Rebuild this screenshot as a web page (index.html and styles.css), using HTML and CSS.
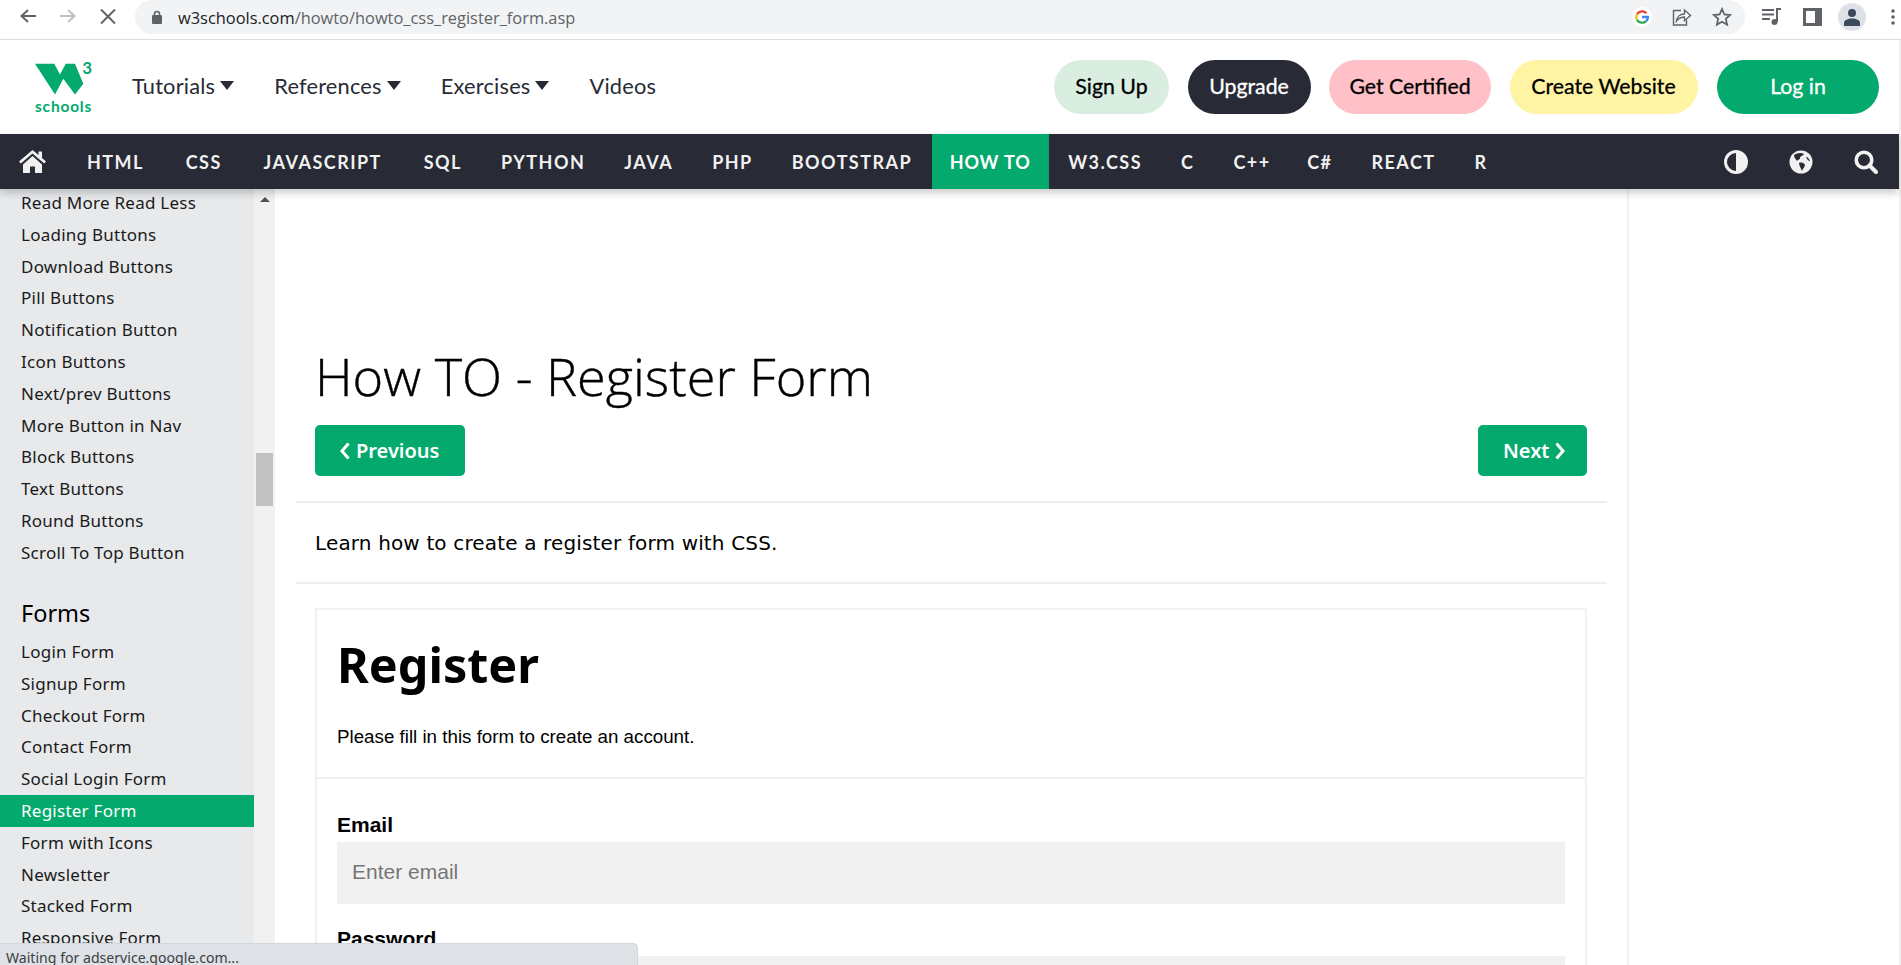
FILE: index.html
```html
<!DOCTYPE html>
<html lang="en">
  <head>
    <meta charset="UTF-8" />
    <title>How To Create a Register Form</title>
    <link rel="stylesheet" href="styles.css">
  </head>
  <body>
    <div class="toolbar">
      <span class="tool"><svg width="20" height="20" viewBox="0 0 20 20"><path d="M18 9H4M10 3L3.500 9l6.500 6" fill="none" stroke="#5f6368" stroke-width="2"/></svg></span>
      <span class="tool"><svg width="20" height="20" viewBox="0 0 20 20"><path d="M2 9h14M10 3l6.500 6-6.500 6" fill="none" stroke="#bdc1c6" stroke-width="2"/></svg></span>
      <span class="tool"><svg width="18" height="18" viewBox="0 0 18 18"><path d="M2 1.500l14 14M16 1.500l-14 14" fill="none" stroke="#5f6368" stroke-width="2"/></svg></span>
      <div class="address">
        <svg class="lock" width="10" height="14" viewBox="0 0 10 14"><path d="M2.500 6V4a2.500 2.500 0 0 1 5 0v2" fill="none" stroke="#5f6368" stroke-width="1.500"/><rect y="5" width="10" height="9" rx="1" fill="#5f6368"/></svg>
        <span class="url">w3schools.com<span class="url-path">/howto/howto_css_register_form.asp</span></span>
        <span class="address-icons">
          <span class="tool-in"><svg width="20" height="20" viewBox="0 0 20 20"><circle cx="10" cy="10" r="10" fill="#fff"/><path d="M14.500 6.200A6 6 0 0 0 5 7.200" fill="none" stroke="#ea4335" stroke-width="2.300"/><path d="M5 7.200a6 6 0 0 0 0 5.600" fill="none" stroke="#fbbc05" stroke-width="2.300"/><path d="M5 12.800a6 6 0 0 0 9.200 1.300" fill="none" stroke="#34a853" stroke-width="2.300"/><path d="M14.200 14.100A6 6 0 0 0 16 10h-6" fill="none" stroke="#4285f4" stroke-width="2.300"/></svg></span>
          <span class="tool-in"><svg width="20" height="20" viewBox="0 0 20 20"><path d="M9 3.500H1.500V18h13v-5" fill="none" stroke="#5f6368" stroke-width="1.400"/><path d="M4.500 14c.5-4 3.500-7 8-7V3l6 5.500-6 5V10c-3.500 0-6 1.500-8 4z" fill="#fff" stroke="#5f6368" stroke-width="1.400"/></svg></span>
          <span class="tool-in"><svg width="20" height="20" viewBox="0 0 20 20"><path d="M10 2l2.400 5.500 5.800.5-4.400 3.900 1.300 5.800L10 14.700l-5.100 3 1.300-5.800L1.800 8l5.800-.5z" fill="none" stroke="#5f6368" stroke-width="1.800"/></svg></span>
        </span>
      </div>
      <span class="tool first-ext"><svg width="20" height="18" viewBox="0 0 20 18"><path d="M0 2h12M0 6.500h12M0 11h8" fill="none" stroke="#5f6368" stroke-width="1.800"/><path d="M15 14V1h4" fill="none" stroke="#5f6368" stroke-width="2"/><circle cx="12.500" cy="14" r="3" fill="#5f6368"/></svg></span>
      <span class="tool"><svg width="19" height="18" viewBox="0 0 19 18"><path d="M0 0h19v18H0z" fill="#5f6368"/><rect x="3" y="3" width="9" height="12" fill="#fff"/></svg></span>
      <span class="tool"><span class="avatar"><svg width="18" height="18" viewBox="0 0 18 18"><circle cx="9" cy="5" r="4" fill="#3c4a5e"/><path d="M1 18v-3c0-3 4-4.500 8-4.500s8 1.500 8 4.500v3z" fill="#3c4a5e"/></svg></span></span>
      <span class="tool tool-dots"><svg width="4" height="16" viewBox="0 0 4 16"><circle cx="2" cy="2" r="1.800" fill="#5f6368"/><circle cx="2" cy="8" r="1.800" fill="#5f6368"/><circle cx="2" cy="14" r="1.800" fill="#5f6368"/></svg></span>
    </div>

    <div class="page">
      <header class="site-header">
        <a class="logo">
          <svg width="57" height="34" viewBox="0 0 57 34"><path d="M0 2.800h19.300L25 13.500l5.700-10.700H40l8.300 20L40 33.500 28.300 17.800 20 33.500z" fill="#04aa6d"/></svg>
          <span class="logo-three">3</span>
          <span class="logo-name">schools</span>
        </a>
        <nav class="main-links">
          <a>Tutorials<i class="caret"></i></a>
          <a>References<i class="caret"></i></a>
          <a>Exercises<i class="caret"></i></a>
          <a>Videos</a>
        </nav>
        <div class="pills">
          <a class="pill pill-signup">Sign Up</a>
          <a class="pill pill-upgrade">Upgrade</a>
          <a class="pill pill-cert">Get Certified</a>
          <a class="pill pill-web">Create Website</a>
          <a class="pill pill-login">Log in</a>
        </div>
      </header>

      <nav class="topnav">
        <a class="home"><svg width="27" height="23" viewBox="0 0 27 23"><path d="M13.500 0L0 11.500 1.800 13.500 13.500 3.500l11.700 10 1.800-2-4-3.400V1.500h-3.500v3.600zM4 14.500L13.500 6l9.500 8.500V23h-7v-6.500h-5V23H4z" fill="#f1f1f1"/></svg></a>
        <a>HTML</a>
        <a class="roomy">CSS</a>
        <a class="roomy">JAVASCRIPT</a>
        <a class="roomy">SQL</a>
        <a>PYTHON</a>
        <a>JAVA</a>
        <a>PHP</a>
        <a>BOOTSTRAP</a>
        <a class="active">HOW TO</a>
        <a>W3.CSS</a>
        <a>C</a>
        <a>C++</a>
        <a class="tight">C#</a>
        <a>REACT</a>
        <a>R</a>
        <div class="nav-icons">
          <span class="nav-icon"><svg width="24" height="24" viewBox="0 0 24 24"><circle cx="12" cy="12" r="10.500" fill="#282a35" stroke="#f1f1f1" stroke-width="3"/><path d="M12 2a10 10 0 0 1 0 20z" fill="#f1f1f1"/></svg></span>
          <span class="nav-icon"><svg width="24" height="24" viewBox="0 0 24 24"><circle cx="12" cy="12" r="11.500" fill="#f1f1f1"/><path d="M5 5c3-2 7-3 10-1-1 2-4 2-4 4 0 2-2 1-3 3-1-2-3-3-3-6zM10 13c3-1 5 0 6 2 0 2-2 3-3 6-1-3-3-5-3-8zM17 7c2 0 3 2 4 4-2 0-3-2-4-4z" fill="#282a35"/></svg></span>
          <span class="nav-icon"><svg width="24" height="24" viewBox="0 0 24 24"><circle cx="10" cy="10" r="7.800" fill="none" stroke="#f1f1f1" stroke-width="3.600"/><path d="M15.500 15.500l6.500 6.500" stroke="#f1f1f1" stroke-width="4" stroke-linecap="round"/></svg></span>
        </div>
      </nav>

      <div class="layout">
        <aside class="sidebar">
          <div class="side-list">
            <a>Read More Read Less</a>
            <a>Loading Buttons</a>
            <a>Download Buttons</a>
            <a>Pill Buttons</a>
            <a>Notification Button</a>
            <a>Icon Buttons</a>
            <a>Next/prev Buttons</a>
            <a>More Button in Nav</a>
            <a>Block Buttons</a>
            <a>Text Buttons</a>
            <a>Round Buttons</a>
            <a>Scroll To Top Button</a>
            <h3>Forms</h3>
            <a>Login Form</a>
            <a>Signup Form</a>
            <a>Checkout Form</a>
            <a>Contact Form</a>
            <a>Social Login Form</a>
            <a class="current">Register Form</a>
            <a>Form with Icons</a>
            <a>Newsletter</a>
            <a>Stacked Form</a>
            <a>Responsive Form</a>
          </div>
          <div class="side-scroll">
            <i class="scroll-up"></i>
            <i class="scroll-thumb"></i>
          </div>
        </aside>

        <main class="content">
          <div class="inner">
            <h1 class="page-title">How TO - Register Form</h1>
            <div class="pager">
              <a class="pager-btn pager-prev"><svg width="10" height="18" viewBox="0 0 10 18"><path d="M8.500 1.500L2 9l6.500 7.500" fill="none" stroke="#fff" stroke-width="3"/></svg>Previous</a>
              <a class="pager-btn pager-next">Next<svg width="10" height="18" viewBox="0 0 10 18"><path d="M1.500 1.500L8 9l-6.500 7.500" fill="none" stroke="#fff" stroke-width="3"/></svg></a>
            </div>
          </div>
          <hr class="rule" />
          <p class="intro">Learn how to create a register form with CSS.</p>
          <hr class="rule rule-low" />
          <div class="inner">
            <form class="demo">
              <div class="demo-head">
                <h2>Register</h2>
                <p>Please fill in this form to create an account.</p>
              </div>
              <div class="demo-body">
                <label for="email">Email</label>
                <input id="email" type="text" placeholder="Enter email" />
                <label for="psw">Password</label>
                <input id="psw" type="password" />
              </div>
            </form>
          </div>
        </main>

        <aside class="right-col"></aside>
      </div>
    </div>

    <div class="status">Waiting for adservice.google.com...</div>
  </body>
</html>
```

FILE: styles.css
```css
* {
  box-sizing: border-box;
}

html,
body {
  height: 100%;
}

body {
  margin: 0;
  display: flex;
  flex-direction: column;
  overflow: hidden;
  background: #fff;
  color: #000;
  font-family: "Noto Sans", sans-serif;
}

/* browser bar */
.toolbar {
  flex: none;
  display: flex;
  height: 40px;
  padding: 0 0 6px 8px;
  border-bottom: 1px solid #dadce0;
  background: #fff;
}

.tool {
  width: 40px;
  display: flex;
  align-items: center;
  justify-content: center;
}

.tool-dots {
  width: 29px;
  padding-left: 13px;
}

.first-ext {
  margin-left: 7px;
}

.avatar {
  width: 28px;
  height: 28px;
  border-radius: 50%;
  background: #dee1e6;
  display: flex;
  align-items: center;
  justify-content: center;
}

.address {
  width: 1610px;
  height: 34px;
  margin-left: 7px;
  padding-left: 17px;
  display: flex;
  align-items: center;
  border-radius: 17px;
  background: #f1f3f4;
}

.lock {
  margin-right: 16px;
}

.url {
  font-size: 16.400px;
  color: #202124;
  font-family: "Open Sans", sans-serif;
}

.url-path {
  color: #5f6368;
}

.address-icons {
  margin-left: auto;
  margin-right: 3px;
  display: flex;
}

.tool-in {
  width: 40px;
  display: flex;
  justify-content: center;
}

/* site header */
.page {
  flex: 1;
  min-height: 0;
  display: flex;
  flex-direction: column;
  border-right: 2px solid #f1f1f1;
}

.site-header {
  flex: none;
  height: 94px;
  display: flex;
  align-items: center;
  padding: 0 20px 0 35px;
  font-family: Lato, sans-serif;
}

.logo {
  position: relative;
  width: 57px;
  height: 53px;
}

.logo svg {
  position: absolute;
  left: 0;
  top: 0;
}

.logo-three {
  position: absolute;
  right: 0;
  top: -3px;
  color: #04aa6d;
  font: 700 17px/20px Lato, sans-serif;
}

.logo-name {
  position: absolute;
  left: 0;
  bottom: -1px;
  color: #04aa6d;
  font: 700 15.500px/18px Lato, sans-serif;
  letter-spacing: 0.800px;
}

.main-links {
  display: flex;
  gap: 40px;
  margin-left: 40px;
  padding-bottom: 4px;
  font-size: 21.800px;
  letter-spacing: 0.200px;
  color: #282a35;
}

.main-links a {
  display: flex;
  align-items: center;
}

.caret {
  width: 0;
  height: 0;
  margin-left: 5px;
  border-top: 9px solid #282a35;
  border-left: 7px solid transparent;
  border-right: 7px solid transparent;
}

.pills {
  margin-left: auto;
  display: flex;
  gap: 18.500px;
}

.pill {
  height: 54px;
  padding-bottom: 2px;
  border-radius: 27px;
  display: flex;
  align-items: center;
  justify-content: center;
  font-size: 21.300px;
  font-weight: 400;
  -webkit-text-stroke: 0.300px;
}

.pill-signup {
  width: 115px;
  background: #d9eee1;
}

.pill-upgrade {
  width: 123px;
  background: #282a35;
  color: #fff;
}

.pill-cert {
  width: 162px;
  background: #ffc0c7;
}

.pill-web {
  width: 188px;
  margin-right: 1px;
  background: #fff4a3;
}

.pill-login {
  width: 162px;
  background: #04aa6d;
  color: #fff;
}

/* dark nav */
.topnav {
  flex: none;
  position: relative;
  z-index: 2;
  height: 55px;
  display: flex;
  background: #282a35;
  color: #f1f1f1;
  font-family: Lato, sans-serif;
  font-size: 18px;
  font-weight: 700;
  letter-spacing: 1.470px;
  box-shadow: 0 4px 8px rgba(0, 0, 0, 0.2);
}

.topnav a {
  display: flex;
  align-items: center;
  padding: 0 19.500px;
}

.topnav .home {
  width: 67.500px;
  padding: 0 0 0 19px;
}

.topnav .roomy {
  margin-left: 2.800px;
}

.topnav .tight {
  margin-left: -2.400px;
}

.topnav .active {
  padding: 0 18px;
  background: #04aa6d;
  color: #fff;
  letter-spacing: 0.900px;
}

.nav-icons {
  margin-left: auto;
  padding-right: 1px;
  display: flex;
}

.nav-icon {
  width: 65px;
  display: flex;
  align-items: center;
  justify-content: center;
}

/* body of the page */
.layout {
  flex: 1;
  min-height: 0;
  display: flex;
  overflow: hidden;
}

.sidebar {
  flex: none;
  width: 275px;
  display: flex;
  overflow: hidden;
}

.side-list {
  width: 254px;
  margin-top: -2px;
  background: #e7e9eb;
  font-size: 17px;
  letter-spacing: 0.250px;
}

.side-list a {
  display: block;
  height: 31.800px;
  line-height: 31.800px;
  padding-left: 21px;
  white-space: nowrap;
  color: #1a1a1a;
}

.side-list .current {
  background: #04aa6d;
  color: #fff;
}

.side-list h3 {
  height: 67.500px;
  margin: 0;
  padding: 28px 0 0 21px;
  font-size: 23.500px;
  font-weight: 400;
  letter-spacing: 0;
  line-height: 32px;
}

.side-scroll {
  width: 21px;
  padding-top: 8px;
  display: flex;
  flex-direction: column;
  align-items: center;
  background: #f1f1f1;
}

.scroll-up {
  width: 0;
  height: 0;
  border-bottom: 5px solid #505050;
  border-left: 5px solid transparent;
  border-right: 5px solid transparent;
}

.scroll-thumb {
  width: 17px;
  height: 53px;
  margin-top: 251px;
  background: #c1c1c1;
}

.content {
  width: 1354px;
  padding: 0 20px 0 21px;
  border-right: 2px solid #f1f1f1;
}

.inner {
  padding: 0 20px 0 19px;
}

.page-title {
  margin: 0;
  padding-top: 155px;
  font-family: "Open Sans", sans-serif;
  font-size: 52.300px;
  font-weight: 300;
  line-height: 64px;
  white-space: nowrap;
  -webkit-text-stroke: 0.400px;
}

.pager {
  display: flex;
  justify-content: space-between;
  margin-top: 17px;
}

.pager-btn {
  height: 51px;
  display: flex;
  align-items: center;
  gap: 6px;
  border-radius: 5px;
  background: #04aa6d;
  color: #fff;
  font-size: 20px;
  font-weight: 600;
}

.pager-prev {
  width: 150px;
  padding-left: 25px;
}

.pager-next {
  width: 109px;
  padding-left: 25px;
}

.rule {
  height: 2px;
  margin: 25px 0 0;
  border: 0;
  background: #eee;
}

.rule-low {
  margin-top: 0;
}

.intro {
  height: 79px;
  margin: 0;
  padding-left: 19px;
  font-family: "DejaVu Sans", sans-serif;
  font-size: 20px;
  letter-spacing: 0.150px;
  line-height: 80px;
}

.demo {
  margin-top: 24px;
  border: 2px solid #f1f1f1;
  border-width: 2px 2px 0;
  font-family: "Liberation Sans", sans-serif;
}

.demo-head {
  height: 169px;
  padding: 0 20px;
  border-bottom: 2px solid #f1f1f1;
}

.demo-head h2 {
  margin: 0;
  padding-top: 22px;
  font-family: "Noto Sans", sans-serif;
  font-size: 48.500px;
  font-weight: 700;
  line-height: 64px;
}

.demo-head p {
  margin: 29px 0 0;
  font-size: 18.760px;
  line-height: 24px;
}

.demo-body {
  padding: 34px 20px 0;
}

.demo-body label {
  display: block;
  margin-bottom: 5px;
  font-size: 21px;
  font-weight: 700;
  line-height: 24px;
}

.demo-body input {
  display: block;
  width: 100%;
  height: 62px;
  margin: 0 0 23px;
  padding: 0 15px 2px;
  border: 0;
  background: #f1f1f1;
  font-family: "Liberation Sans", sans-serif;
  font-size: 21px;
}

.right-col {
  flex: 1;
}

/* link status bubble */
.status {
  position: absolute;
  left: 0;
  bottom: 0;
  z-index: 3;
  width: 638px;
  height: 22px;
  padding-left: 6px;
  border-radius: 0 5px 0 0;
  border-top: 1px solid #d3d6da;
  border-right: 1px solid #d3d6da;
  background: #dee1e6;
  color: #3c4043;
  font-size: 14.100px;
  line-height: 28px;
  overflow: hidden;
}
```
